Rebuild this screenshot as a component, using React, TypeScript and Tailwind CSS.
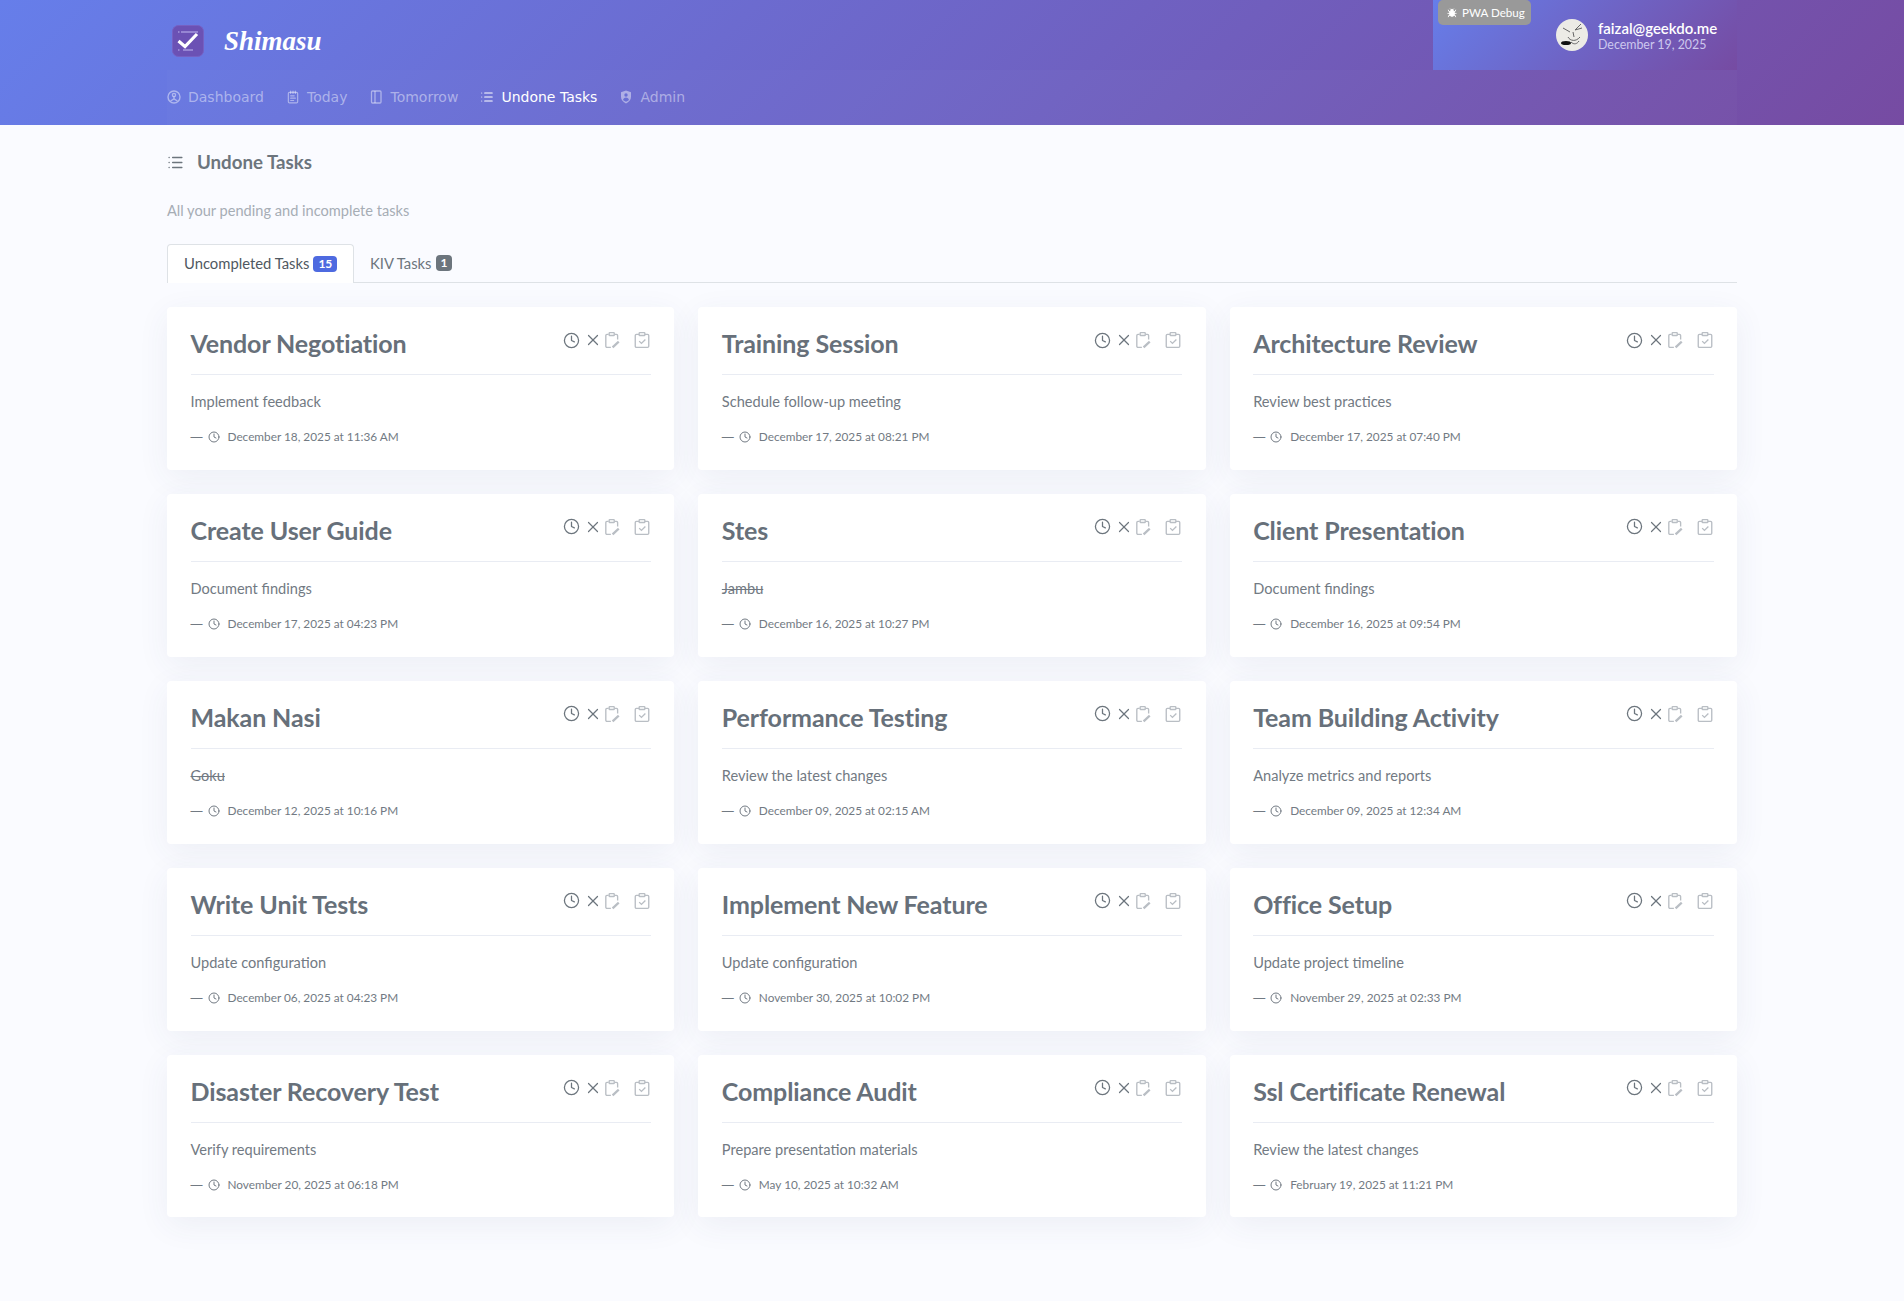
import { Bug, Clock, List, NotepadText, X } from 'lucide-react'

const TASKS = [
  { title: 'Vendor Negotiation', note: 'Implement feedback', date: 'December 18, 2025 at 11:36 AM' },
  { title: 'Training Session', note: 'Schedule follow-up meeting', date: 'December 17, 2025 at 08:21 PM' },
  { title: 'Architecture Review', note: 'Review best practices', date: 'December 17, 2025 at 07:40 PM' },
  { title: 'Create User Guide', note: 'Document findings', date: 'December 17, 2025 at 04:23 PM' },
  { title: 'Stes', note: 'Jambu', date: 'December 16, 2025 at 10:27 PM', struck: true },
  { title: 'Client Presentation', note: 'Document findings', date: 'December 16, 2025 at 09:54 PM' },
  { title: 'Makan Nasi', note: 'Goku', date: 'December 12, 2025 at 10:16 PM', struck: true },
  { title: 'Performance Testing', note: 'Review the latest changes', date: 'December 09, 2025 at 02:15 AM' },
  { title: 'Team Building Activity', note: 'Analyze metrics and reports', date: 'December 09, 2025 at 12:34 AM' },
  { title: 'Write Unit Tests', note: 'Update configuration', date: 'December 06, 2025 at 04:23 PM' },
  { title: 'Implement New Feature', note: 'Update configuration', date: 'November 30, 2025 at 10:02 PM' },
  { title: 'Office Setup', note: 'Update project timeline', date: 'November 29, 2025 at 02:33 PM' },
  { title: 'Disaster Recovery Test', note: 'Verify requirements', date: 'November 20, 2025 at 06:18 PM' },
  { title: 'Compliance Audit', note: 'Prepare presentation materials', date: 'May 10, 2025 at 10:32 AM' },
  { title: 'Ssl Certificate Renewal', note: 'Review the latest changes', date: 'February 19, 2025 at 11:21 PM' },
]

function DashboardIcon() {
  return (
    <svg width="14" height="14" viewBox="0 0 14 14" fill="none" stroke="currentColor" strokeWidth="1.4">
      <circle cx="7" cy="7" r="6" />
      <circle cx="7" cy="5" r="1.6" />
      <path d="M7 6.6v2.2L3.6 11M7 8.8l3.4 2.2" />
    </svg>
  )
}

function TodayIcon() {
  return <NotepadText size={14} />
}

function TomorrowIcon() {
  return (
    <svg width="14" height="14" viewBox="0 0 14 14" fill="none" stroke="currentColor" strokeWidth="1.3">
      <rect x="2.5" y="1" width="9.5" height="12" rx="1" />
      <path d="M6 1v12" />
    </svg>
  )
}

function ListIcon() {
  return <List size={14} strokeWidth={1.8} />
}

function AdminIcon() {
  return (
    <svg width="14" height="14" viewBox="0 0 14 14" fill="none">
      <path d="M7 .6l5 1.7v4.5C12 10 9.8 12.3 7 13.4 4.2 12.3 2 10 2 6.8V2.3z" fill="currentColor" />
      <circle cx="7" cy="5" r="1.7" fill="#6a6fd4" />
      <path d="M4 10c.6-2 2-2.6 3-2.6S9.400 8 10 10c-1 .9-2 1.400-3 1.800-1-.4-2-.9-3-1.800z" fill="#6a6fd4" />
    </svg>
  )
}

function ClipboardEdit() {
  return (
    <svg width="18" height="18" viewBox="0 0 16 16" fill="none" stroke="currentColor" strokeWidth="1.2" className="text-[#b9bec4]">
      <path d="M10.500 3h1.500a1 1 0 0 1 1 1v3.500M7 14.500H3.500a1 1 0 0 1-1-1V4a1 1 0 0 1 1-1H5" />
      <rect x="5.500" y="1.500" width="4.500" height="2.500" rx=".5" />
      <path d="M8.500 14.500l5.500-5" strokeWidth="2" />
    </svg>
  )
}

function ClipboardDone() {
  return (
    <svg width="18" height="18" viewBox="0 0 16 16" fill="none" stroke="currentColor" strokeWidth="1.2" className="text-[#b9bec4]">
      <rect x="2" y="3" width="12" height="11.500" rx="1" />
      <rect x="5.500" y="1.500" width="5" height="2.500" rx=".5" fill="#fff" />
      <path d="M5.500 9l2 2 3.500-3.500" />
    </svg>
  )
}

const NAV = [
  { label: 'Dashboard', icon: DashboardIcon },
  { label: 'Today', icon: TodayIcon },
  { label: 'Tomorrow', icon: TomorrowIcon },
  { label: 'Undone Tasks', icon: ListIcon, active: true },
  { label: 'Admin', icon: AdminIcon },
]

function Logo() {
  return (
    <svg width="32" height="32" viewBox="0 0 32 32" className="shrink-0">
      <rect x="0.5" y="0.5" width="31" height="31" rx="6" fill="#6b51b4" stroke="#7660c2" />
      <path d="M6 7h1.500M9 7h17M6 25h1.500M11 25h10" stroke="#a596dd" strokeWidth="1.4" />
      <path d="M6.500 16l6.500 5.500L25 9" stroke="#fff" strokeWidth="3.200" fill="none" />
    </svg>
  )
}

function Avatar() {
  return (
    <svg width="32" height="32" viewBox="0 0 32 32" className="shrink-0">
      <circle cx="16" cy="16" r="16" fill="#ecebe6" />
      <path d="M7 9l7 4M25 5l-6 6 7-2M12 18c2 4 8 5 12 0M17 13l1 5M15 23c3 3 6 2 8-1" stroke="#666" strokeWidth="1" fill="none" />
      <ellipse cx="10" cy="24" rx="5" ry="2" fill="#111" />
    </svg>
  )
}

function TaskCard({ task }: { task: (typeof TASKS)[number] }) {
  return (
    <div className="h-[162.900px] rounded-[4px] bg-white px-[23.500px] shadow-[0_8px_32px_rgba(60,70,120,0.07)]">
      <div className="flex h-[68px] items-start justify-between border-b border-[#e9ecf3]">
        <div className="pt-[18px] text-[25px] leading-[36px] font-bold tracking-[-0.1px] text-[#67707a]">{task.title}</div>
        <div className="flex items-center pt-[24px] text-[#6c757d]">
          <Clock size={17} strokeWidth={1.8} />
          <X size={18} strokeWidth={1.6} className="ml-[4px]" />
          <span className="ml-[1px]"><ClipboardEdit /></span>
          <span className="ml-[12px]"><ClipboardDone /></span>
        </div>
      </div>
      <div className={`mt-[17px] text-[14.600px] leading-[20px] text-[#727a83] ${task.struck ? 'line-through' : ''}`}>
        {task.note}
      </div>
      <div className="mt-[16px] flex items-center text-[11.800px] leading-[18px] text-[#727a83]">
        <span className="[font-family:'Liberation_Sans',sans-serif] text-[12px]">—</span>
        <Clock size={12} className="ml-[5px]" />
        <span className="ml-[8px]">{task.date}</span>
      </div>
    </div>
  )
}

export default function App() {
  return (
    <div className="min-h-[1301px] bg-[#fafbff] [font-family:Lato,sans-serif]">
      <header className="h-[125px] bg-[linear-gradient(135deg,#667eea_0%,#764ba2_100%)]">
        <div className="mx-auto w-[1570px]">
          <div className="flex h-[70px] items-start justify-between">
            <div className="ml-[5px] flex items-center gap-[20px] pt-[25px]">
              <Logo />
              <span className="text-[27px] leading-[32px] font-bold text-white italic [font-family:'Liberation_Serif',cursive]">Shimasu</span>
            </div>
            <div className="relative flex h-[70px] w-[304px] items-center bg-[linear-gradient(135deg,#667eea_0%,#764ba2_100%)] pl-[123px]">
              <div className="absolute top-0 left-[5px] flex h-[25px] w-[93px] items-center gap-[5px] rounded-[5px] bg-[#999999] pl-[9px] text-[11.600px] text-white">
                <Bug size={10} fill="#fff" />
                PWA Debug
              </div>
              <Avatar />
              <div className="ml-[10px]">
                <div className="text-[15px] leading-[18px] font-semibold text-white">faizal@geekdo.me</div>
                <div className="text-[12.400px] leading-[15px] text-[#cdc8ee]">December 19, 2025</div>
              </div>
            </div>
          </div>
          <nav className="flex h-[55px] items-center gap-[22px] bg-white/[0.02] pb-[1px] [font-family:'DejaVu_Sans',sans-serif]">
            {NAV.map(item => (
              <div
                key={item.label}
                className={`flex items-center gap-[7px] text-[14px] ${item.active ? 'text-white' : 'text-white/45'}`}
              >
                <item.icon />
                {item.label}
              </div>
            ))}
          </nav>
        </div>
      </header>
      <main className="mx-auto w-[1570px]">
        <div className="flex h-[74px] items-center gap-[13px] text-[#6c757d]">
          <List size={17} />
          <h1 className="text-[18.700px] font-bold">Undone Tasks</h1>
        </div>
        <p className="pt-[2px] text-[14.600px] leading-[20px] text-[#a6adb5]">All your pending and incomplete tasks</p>
        <div className="mt-[23px] flex h-[39px] border-b border-[#dee2e6] text-[14.800px]">
          <div className="-mb-px flex h-[39px] w-[187px] items-center gap-[4px] rounded-t-[4px] border border-b-0 border-[#dee2e6] bg-white pb-[1px] pl-[16px] text-[#4f5861]">
            Uncompleted Tasks
            <span className="rounded-[4px] bg-[#4e6ae0] px-[5px] text-[12px] leading-[16px] font-bold text-white">15</span>
          </div>
          <div className="flex items-center gap-[4px] pl-[16px] text-[#6c757d]">
            KIV Tasks
            <span className="rounded-[4px] bg-[#6c757d] px-[5px] text-[12px] leading-[16px] font-bold text-white">1</span>
          </div>
        </div>
        <div className="mt-[24px] grid grid-cols-3 gap-x-[24px] gap-y-[24px]">
          {TASKS.map(task => (
            <TaskCard key={task.title} task={task} />
          ))}
        </div>
      </main>
    </div>
  )
}
